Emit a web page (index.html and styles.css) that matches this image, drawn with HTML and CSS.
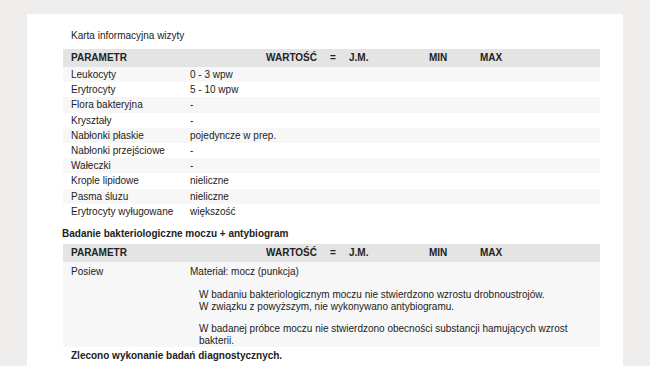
FILE: index.html
```html
<!DOCTYPE html>
<html lang="pl">
<head>
    <meta charset="UTF-8">
    <meta name="viewport" content="width=device-width, initial-scale=1.0">
    <title>Karta informacyjna wizyty</title>
    <link rel="stylesheet" href="styles.css">
</head>
<body>
    <div class="page">
        <div class="doc-title">Karta informacyjna wizyty</div>

        <!-- badanie ogólne moczu -->
        <div class="results">
            <div class="row head">
                <span>PARAMETR</span>
                <span class="col-value">WARTOŚĆ</span>
                <span class="col-eq">=</span>
                <span>J.M.</span>
                <span>MIN</span>
                <span>MAX</span>
            </div>
            <div class="row"><span>Leukocyty</span><span class="val">0 - 3 wpw</span></div>
            <div class="row"><span>Erytrocyty</span><span class="val">5 - 10 wpw</span></div>
            <div class="row"><span>Flora bakteryjna</span><span class="val">-</span></div>
            <div class="row"><span>Kryształy</span><span class="val">-</span></div>
            <div class="row"><span>Nabłonki płaskie</span><span class="val">pojedyncze w prep.</span></div>
            <div class="row"><span>Nabłonki przejściowe</span><span class="val">-</span></div>
            <div class="row"><span>Wałeczki</span><span class="val">-</span></div>
            <div class="row"><span>Krople lipidowe</span><span class="val">nieliczne</span></div>
            <div class="row"><span>Pasma śluzu</span><span class="val">nieliczne</span></div>
            <div class="row"><span>Erytrocyty wyługowane</span><span class="val">większość</span></div>
        </div>

        <div class="section-title">Badanie bakteriologiczne moczu + antybiogram</div>

        <div class="results">
            <div class="row head">
                <span>PARAMETR</span>
                <span class="col-value">WARTOŚĆ</span>
                <span class="col-eq">=</span>
                <span>J.M.</span>
                <span>MIN</span>
                <span>MAX</span>
            </div>
            <div class="row culture">
                <span>Posiew</span>
                <div class="val">
                    <div class="material">Materiał: mocz (punkcja)</div>
                    <p class="note">W badaniu bakteriologicznym moczu nie stwierdzono wzrostu drobnoustrojów.<br>W związku z powyższym, nie wykonywano antybiogramu.</p>
                    <p class="note">W badanej próbce moczu nie stwierdzono obecności substancji hamujących wzrost bakterii.</p>
                </div>
            </div>
        </div>

        <div class="footer-note">Zlecono wykonanie badań diagnostycznych.</div>
    </div>
</body>
</html>
```

FILE: styles.css
```css
body {
    margin: 0;
    background-color: #efeeec;
    font-family: 'Liberation Sans', Arial, sans-serif;
    font-size: 10px;
    color: #222;
}
.page {
    background: #fff;
    margin: 14px 27px 0 27px;
    padding: 14px 23px 20px 36px;
    min-height: 340px;
    box-sizing: border-box;
}
.doc-title {
    line-height: 15px;
    padding-left: 8px;
    margin-bottom: 6px;
}
.row {
    display: grid;
    grid-template-columns: 119px 127px 32px 80px 51px 1fr;
    padding: 0 8px;
    line-height: 15.2px;
}
.row .val {
    grid-column: 2 / 7;
}
.row:nth-child(even) {
    background-color: #f7f7f7;
}
.row.head {
    background-color: #e4e4e4;
    font-weight: bold;
    line-height: 18px;
}
.col-value {
    text-align: right;
}
.col-eq {
    padding-left: 13px;
}
.section-title {
    font-weight: bold;
    line-height: 15px;
    margin: 7px 0 3px -1px;
}
.row.culture {
    padding-top: 2px;
    padding-bottom: 1px;
    padding-right: 18px;
}
.material {
    line-height: 15px;
}
.note {
    margin: 10px 0 0 9px;
    line-height: 11.5px;
}
.note + .note {
    margin-top: 11px;
}
.footer-note {
    font-weight: bold;
    line-height: 15px;
    padding: 1px 8px 0;
}
```
